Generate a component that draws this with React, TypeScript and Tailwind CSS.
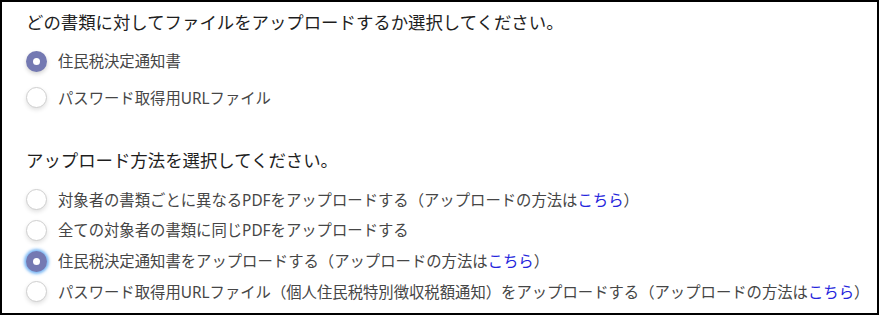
import React from 'react'

type Option = {
  label: string
  link?: boolean
  checked?: boolean
  focused?: boolean
}

const docOptions: Option[] = [
  { label: '住民税決定通知書', checked: true },
  { label: 'パスワード取得用URLファイル' },
]

const methodOptions: Option[] = [
  { label: '対象者の書類ごとに異なるPDFをアップロードする', link: true },
  { label: '全ての対象者の書類に同じPDFをアップロードする' },
  { label: '住民税決定通知書をアップロードする', link: true, checked: true, focused: true },
  { label: 'パスワード取得用URLファイル（個人住民税特別徴収税額通知）をアップロードする', link: true },
]

function Radio({ checked, focused }: { checked?: boolean; focused?: boolean }) {
  if (checked) {
    return (
      <span
        className={
          focused
            ? 'flex h-[21px] w-[21px] shrink-0 items-center justify-center rounded-full bg-[#7479b2] shadow-[0_0_3px_2px_rgba(80,160,240,0.75)]'
            : 'flex h-[21px] w-[21px] shrink-0 items-center justify-center rounded-full bg-[#7479b2] shadow-[0_2px_4px_rgba(0,0,0,0.18)]'
        }
      >
        <span className="h-[7px] w-[7px] rounded-full bg-white" />
      </span>
    )
  }
  return (
    <span className="h-[21px] w-[21px] shrink-0 rounded-full border border-[#cfcfcf] bg-white shadow-[0_2px_4px_rgba(0,0,0,0.12)]" />
  )
}

function OptionRow({ option }: { option: Option }) {
  return (
    <label className="flex h-[24px] items-center">
      <Radio checked={option.checked} focused={option.focused} />
      <span className="ml-[11px] whitespace-nowrap text-[15.35px] leading-[24px] text-[#464646]">
        {option.label}
        {option.link && (
          <>
            （アップロードの方法は<span className="text-[#2424dc]">こちら</span>）
          </>
        )}
      </span>
    </label>
  )
}

export default function App() {
  return (
    <div
      className="h-[315px] w-[879px] border-2 border-black bg-white pl-[24px] pt-[8px]"
      style={{ fontFamily: '"Noto Sans", "Noto Sans CJK JP", sans-serif' }}
    >
      <h2 className="text-[17.4px] leading-[24px] text-[#1e1e1e]">
        どの書類に対してファイルをアップロードするか選択してください。
      </h2>
      <div className="mt-[15px] flex flex-col gap-[12.5px]">
        {docOptions.map(o => (
          <OptionRow key={o.label} option={o} />
        ))}
      </div>

      <h2 className="mt-[38.5px] text-[17.4px] leading-[24px] text-[#1e1e1e]">
        アップロード方法を選択してください。
      </h2>
      <div className="mt-[15.7px] flex flex-col gap-[6.7px]">
        {methodOptions.map(o => (
          <OptionRow key={o.label} option={o} />
        ))}
      </div>
    </div>
  )
}
